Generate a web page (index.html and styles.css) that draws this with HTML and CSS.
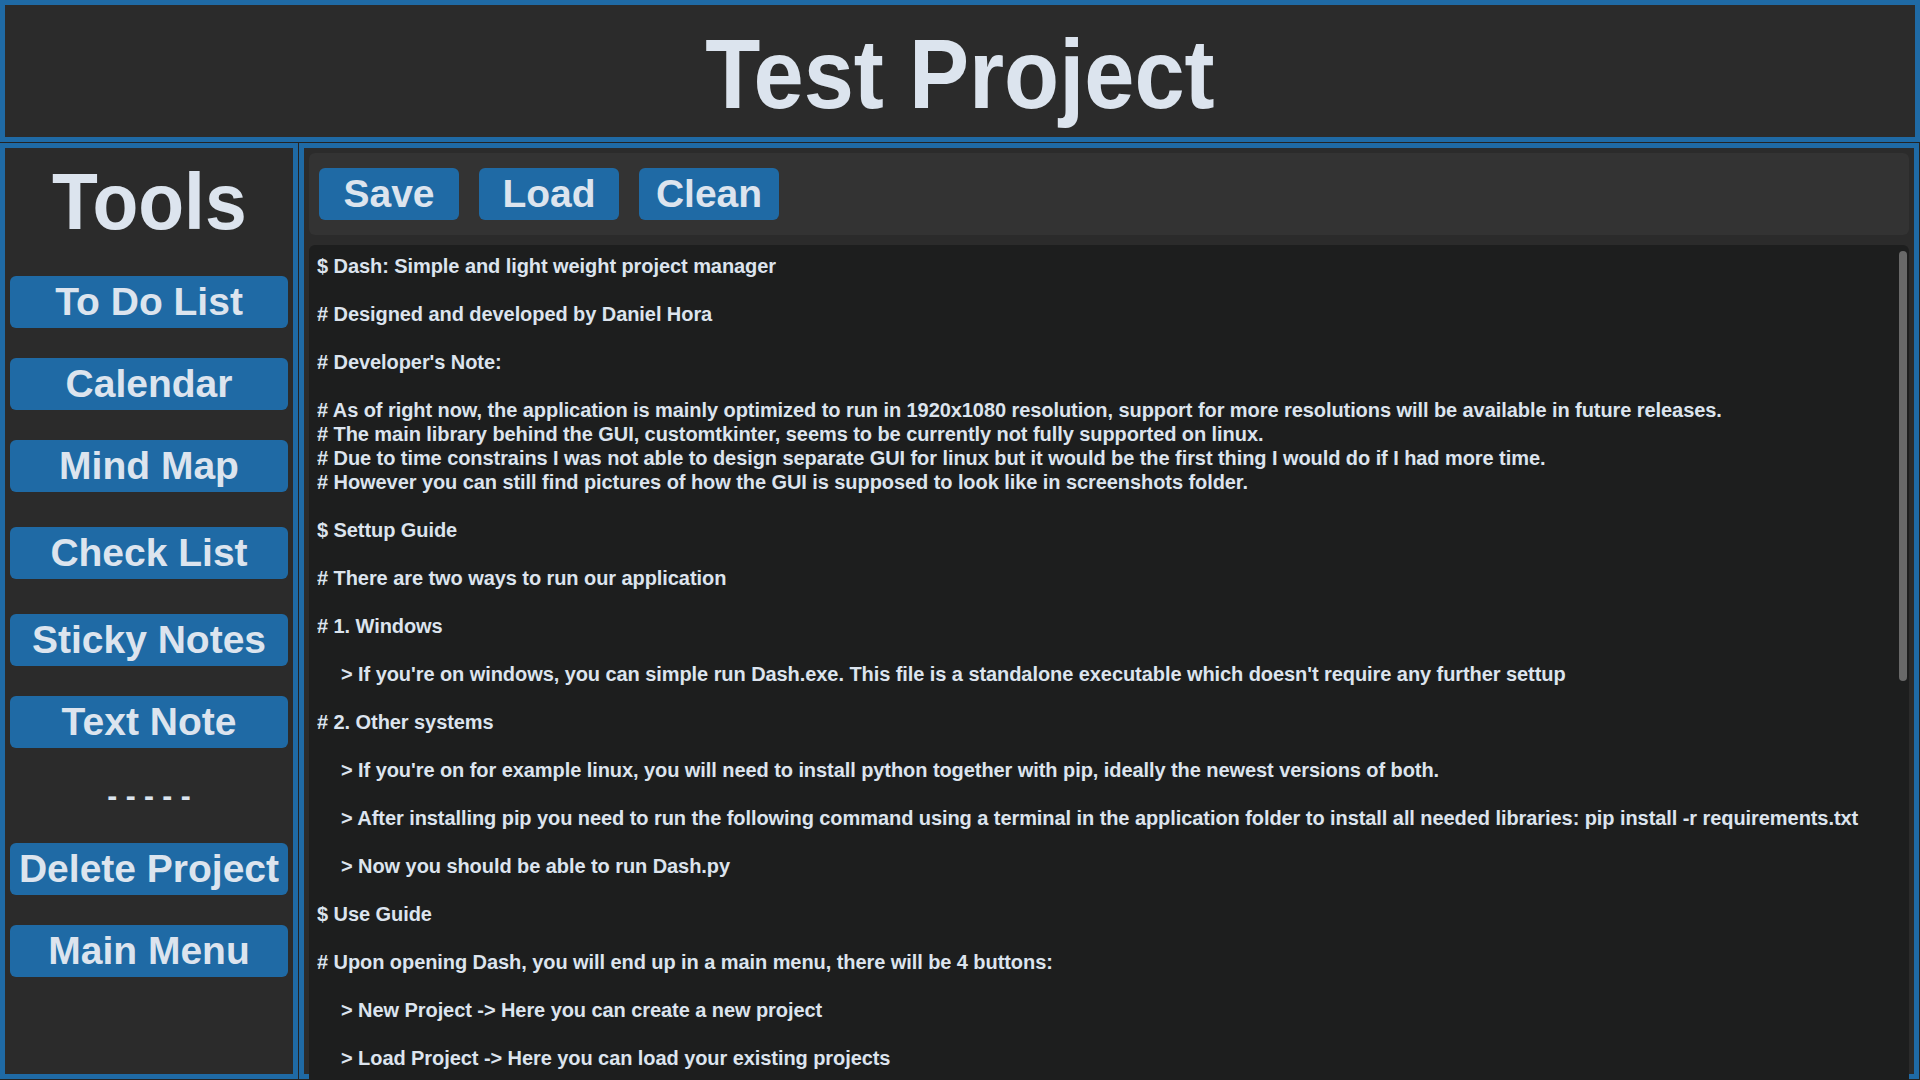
FILE: index.html
```html
<!DOCTYPE html>
<html lang="en">
<head>
<meta charset="utf-8">
<title>Test Project</title>
<link rel="stylesheet" href="styles.css">
</head>
<body>
<div class="app">
  <header class="header">
    <h1 class="title"><span class="title-text">Test Project</span></h1>
  </header>
  <div class="content">
    <aside class="sidebar">
      <div class="tools-title"><span class="tools-text">Tools</span></div>
      <button class="side-btn">To Do List</button>
      <button class="side-btn gap30">Calendar</button>
      <button class="side-btn gap30">Mind Map</button>
      <button class="side-btn gap35">Check List</button>
      <button class="side-btn gap35">Sticky Notes</button>
      <button class="side-btn gap30">Text Note</button>
      <div class="divider">- - - - -</div>
      <button class="side-btn">Delete Project</button>
      <button class="side-btn gap30">Main Menu</button>
    </aside>
    <main class="main">
      <div class="toolbar">
        <button class="tool-btn">Save</button>
        <button class="tool-btn">Load</button>
        <button class="tool-btn">Clean</button>
      </div>
      <div class="textbox">
        <div class="text">$ Dash: Simple and light weight project manager

# Designed and developed by Daniel Hora

# Developer's Note:

# As of right now, the application is mainly optimized to run in 1920x1080 resolution, support for more resolutions will be available in future releases.
# The main library behind the GUI, customtkinter, seems to be currently not fully supported on linux.
# Due to time constrains I was not able to design separate GUI for linux but it would be the first thing I would do if I had more time.
# However you can still find pictures of how the GUI is supposed to look like in screenshots folder.

$ Settup Guide

# There are two ways to run our application

# 1. Windows

<span class="ind"></span>&gt; If you're on windows, you can simple run Dash.exe. This file is a standalone executable which doesn't require any further settup

# 2. Other systems

<span class="ind"></span>&gt; If you're on for example linux, you will need to install python together with pip, ideally the newest versions of both.

<span class="ind"></span>&gt; After installing pip you need to run the following command using a terminal in the application folder to install all needed libraries: pip install -r requirements.txt

<span class="ind"></span>&gt; Now you should be able to run Dash.py

$ Use Guide

# Upon opening Dash, you will end up in a main menu, there will be 4 buttons:

<span class="ind"></span>&gt; New Project -&gt; Here you can create a new project

<span class="ind"></span>&gt; Load Project -&gt; Here you can load your existing projects

<span class="ind"></span>&gt; Settings -&gt; Here you can change the appearance of the application
</div>
        <div class="scrollbar"></div>
      </div>
    </main>
  </div>
</div>
</body>
</html>
```

FILE: styles.css
```css
* {
  box-sizing: border-box;
}

html, body {
  margin: 0;
  padding: 0;
}

body {
  width: 1920px;
  height: 1080px;
  overflow: hidden;
  background: #242424;
  font-family: "Liberation Sans", Arial, sans-serif;
  color: #dce4ee;
}

.app {
  display: flex;
  flex-direction: column;
  gap: 1px;
  height: 1080px;
}

.header {
  height: 142px;
  border: 5px solid #1f6aa5;
  background: #2b2b2b;
  display: flex;
  align-items: center;
  justify-content: center;
}

.title {
  margin: 0;
  padding-top: 5px;
  font-size: 98px;
  line-height: 110px;
  font-weight: bold;
  color: #dce4ee;
}

.title-text {
  display: inline-block;
  transform: scaleX(0.92);
}

.content {
  display: flex;
  gap: 1px;
  height: 936px;
}

.sidebar {
  width: 298px;
  height: 936px;
  border: 5px solid #1f6aa5;
  background: #2b2b2b;
  padding: 0 5px;
  display: flex;
  flex-direction: column;
}

.tools-title {
  height: 108px;
  line-height: 108px;
  font-size: 79px;
  font-weight: bold;
  text-align: center;
  margin-bottom: 20px;
}

.tools-text {
  display: inline-block;
  transform: scaleX(0.95);
}

.side-btn {
  flex: none;
  height: 52px;
  width: 278px;
  border: none;
  border-radius: 6px;
  background: #1f6aa5;
  color: #dce4ee;
  font-family: "Liberation Sans", Arial, sans-serif;
  font-size: 39px;
  font-weight: bold;
  line-height: 52px;
  padding: 0;
  text-align: center;
  white-space: nowrap;
}

.gap30 {
  margin-top: 30px;
}

.gap35 {
  margin-top: 35px;
}

.divider {
  height: 95px;
  line-height: 95px;
  font-size: 30px;
  font-weight: bold;
  text-align: center;
}

.main {
  width: 1620px;
  height: 936px;
  border: 5px solid #1f6aa5;
  background: #2b2b2b;
  padding: 5px;
  display: flex;
  flex-direction: column;
  gap: 10px;
}

.toolbar {
  height: 82px;
  flex: none;
  background: #333333;
  border-radius: 6px;
  padding: 15px 10px;
  display: flex;
  gap: 20px;
}

.tool-btn {
  width: 140px;
  height: 52px;
  border: none;
  border-radius: 6px;
  background: #1f6aa5;
  color: #dce4ee;
  font-family: "Liberation Sans", Arial, sans-serif;
  font-size: 39px;
  font-weight: bold;
  line-height: 52px;
  padding: 0;
}

.textbox {
  flex: 1;
  position: relative;
  background: #1d1e1e;
  border-radius: 6px;
  padding: 9px 8px 9px 8px;
}

.text {
  height: 100%;
  overflow: hidden;
  white-space: pre;
  font-size: 20px;
  font-weight: bold;
  line-height: 24px;
  letter-spacing: -0.07px;
}

.ind {
  display: inline-block;
  width: 24px;
}

.scrollbar {
  position: absolute;
  top: 6px;
  right: 2px;
  width: 8px;
  height: 430px;
  border-radius: 4px;
  background: #696969;
}
```
